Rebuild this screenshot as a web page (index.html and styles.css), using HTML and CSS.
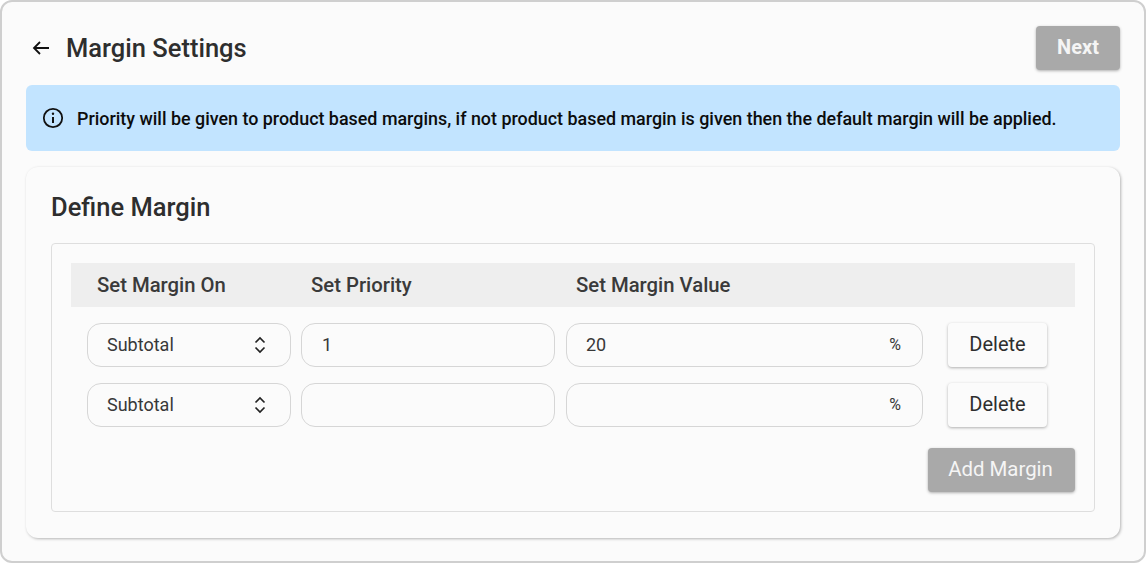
FILE: index.html
```html
<!DOCTYPE html>
<html>
<head>
  <title>Margin Settings</title>
  <link rel="stylesheet" href="styles.css">
</head>
<body>
  <div class="page">
    <div class="top-bar">
      <div class="title-group">
        <svg class="back-icon" width="24" height="24" viewBox="0 0 24 24"><path d="M20 12H5M11 6l-6 6 6 6" fill="none" stroke="#111" stroke-width="1.800"/></svg>
        <h1>Margin Settings</h1>
      </div>
      <button class="btn-disabled btn-next">Next</button>
    </div>

    <div class="alert">
      <svg width="24" height="24" viewBox="0 0 24 24"><circle cx="12" cy="12" r="9.200" fill="none" stroke="#111" stroke-width="1.800"/><path d="M12 11v6" stroke="#111" stroke-width="2" fill="none"/><circle cx="12" cy="7.800" r="1.200" fill="#111"/></svg>
      <span>Priority will be given to product based margins, if not product based margin is given then the default margin will be applied.</span>
    </div>

    <div class="card">
      <h2>Define Margin</h2>
      <div class="inner-box">
        <div class="table-head">
          <div class="head-on">Set Margin On</div>
          <div class="head-priority">Set Priority</div>
          <div class="head-value">Set Margin Value</div>
        </div>

        <div class="row">
          <div class="field select-field">
            <span>Subtotal</span>
            <svg width="16" height="24" viewBox="0 0 16 24"><path d="M3.500 9.500L8 5l4.500 4.500M3.500 14.500L8 19l4.500-4.500" fill="none" stroke="#222" stroke-width="1.700"/></svg>
          </div>
          <div class="field priority-field">1</div>
          <div class="field value-field"><span>20</span><span class="unit">%</span></div>
          <button class="btn-delete">Delete</button>
        </div>

        <div class="row">
          <div class="field select-field">
            <span>Subtotal</span>
            <svg width="16" height="24" viewBox="0 0 16 24"><path d="M3.500 9.500L8 5l4.500 4.500M3.500 14.500L8 19l4.500-4.500" fill="none" stroke="#222" stroke-width="1.700"/></svg>
          </div>
          <div class="field priority-field"></div>
          <div class="field value-field"><span></span><span class="unit">%</span></div>
          <button class="btn-delete">Delete</button>
        </div>

        <div class="add-row">
          <button class="btn-disabled btn-add">Add Margin</button>
        </div>
      </div>
    </div>
  </div>
</body>
</html>
```

FILE: styles.css
```css
* {
  box-sizing: border-box;
}
html, body {
  margin: 0;
  background-color: #fff;
}
body {
  font-family: Roboto, Arial, sans-serif;
  color: #2b2b2b;
}
button {
  font-family: inherit;
  border: none;
  padding: 0 0 2px;
}
.page {
  width: 1146px;
  height: 563px;
  padding: 24px 24px 22px;
  border: 2px solid #cfcfcf;
  border-radius: 12px;
  background-color: #fbfbfb;
  overflow: hidden;
}
.top-bar {
  display: flex;
  justify-content: space-between;
  align-items: center;
  height: 44px;
  margin-bottom: 15px;
}
.title-group {
  display: flex;
  align-items: center;
  gap: 13px;
  padding-left: 3px;
}
h1 {
  margin: 0;
  font-size: 25.500px;
  font-weight: 500;
  color: #2e2e2e;
}
.btn-disabled {
  background-color: #a9a9a9;
  border-radius: 4px;
  box-shadow: 0 1px 3px rgba(0, 0, 0, 0.3);
  color: #f5f5f5;
}
.btn-next {
  width: 84px;
  height: 44px;
  font-size: 20px;
  font-weight: 700;
}
.alert {
  display: flex;
  align-items: center;
  gap: 12px;
  height: 66px;
  padding-left: 15px;
  margin-bottom: 16px;
  background-color: #c2e4ff;
  border-radius: 6px;
  font-size: 17.900px;
  font-weight: 500;
  color: #0c0c0c;
}
.card {
  height: 371px;
  padding: 24px 25px 25px;
  background-color: #fbfbfb;
  border-radius: 12px;
  box-shadow: 1px 1px 3px rgba(0, 0, 0, 0.28);
}
h2 {
  margin: 0 0 19px;
  height: 33px;
  line-height: 33px;
  font-size: 25.500px;
  font-weight: 500;
  color: #2e2e2e;
}
.inner-box {
  height: 269px;
  padding: 19px 19px 0;
  border: 1px solid #dedede;
  border-radius: 4px;
}
.table-head {
  display: flex;
  align-items: center;
  height: 44px;
  margin-bottom: 16px;
  background-color: #eeeeee;
  font-size: 20.300px;
  font-weight: 500;
  color: #3a3a3a;
  padding-bottom: 1px;
}
.head-on {
  width: 240px;
  padding-left: 26px;
}
.head-priority {
  width: 265px;
}
.row {
  display: flex;
  align-items: center;
  height: 44px;
  margin-bottom: 16px;
  padding-left: 16px;
}
.field {
  display: flex;
  align-items: center;
  height: 44px;
  padding-bottom: 1px;
  border: 1px solid #d6d6d6;
  border-radius: 14px;
  font-size: 18px;
  color: #383838;
}
.select-field {
  justify-content: space-between;
  width: 203.500px;
  padding-left: 19px;
  padding-right: 21.500px;
  margin-right: 10.500px;
}
.priority-field {
  width: 254px;
  padding-left: 20px;
  margin-right: 11px;
}
.value-field {
  justify-content: space-between;
  width: 356.500px;
  padding-left: 19px;
  padding-right: 20.500px;
  margin-right: 25.500px;
}
.unit {
  font-size: 16px;
}
.btn-delete {
  width: 99px;
  height: 44px;
  background-color: #fbfbfb;
  border-radius: 4px;
  box-shadow: 0 1px 3px rgba(0, 0, 0, 0.3);
  font-size: 20px;
  color: #2e2e2e;
}
.add-row {
  display: flex;
  justify-content: flex-end;
  margin-top: 21px;
}
.btn-add {
  width: 147px;
  height: 44px;
  padding-right: 2px;
  font-size: 20.400px;
}
```
